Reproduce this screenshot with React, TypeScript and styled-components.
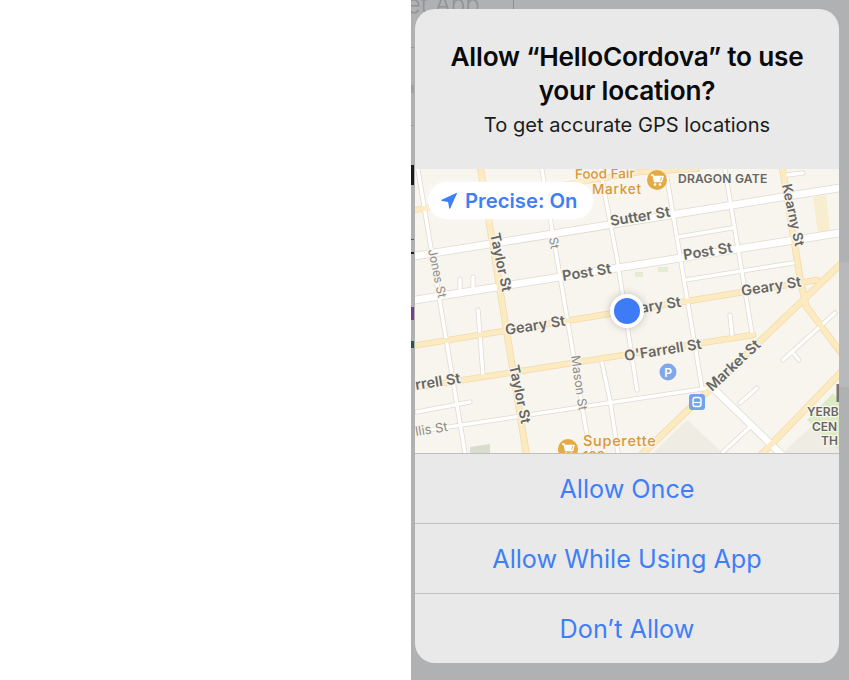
import React from "react";
import styled, { createGlobalStyle } from "styled-components";

const Global = createGlobalStyle`
  html, body { margin: 0; padding: 0; background: #fff; }
  body { font-family: Inter, "Liberation Sans", sans-serif; }
  #root { width: 849px; height: 680px; overflow: hidden; }
`;

const Page = styled.div`
  width: 849px;
  height: 680px;
  display: flex;
  overflow: hidden;
`;
const Blank = styled.div`
  width: 411px;
  flex: none;
  background: #fff;
`;
const Dim = styled.div`
  position: relative;
  flex: 1;
  background: #b0b1b3;
  padding: 9px 10px 17px 4px;
  display: flex;
  overflow: hidden;
`;
const BackText = styled.div`
  position: absolute;
  left: -22px;
  top: -9px;
  white-space: nowrap;
  color: #929395;
  font-size: 24px;
  line-height: 28px;
  font-weight: 300;
`;
const BackBar = styled.div`
  position: absolute;
  left: 102px;
  top: 0;
  width: 1px;
  height: 9px;
  background: #8b8c8e;
`;
const Sliver = styled.div<{ $top: number; $h: number; $c: string }>`
  position: absolute;
  left: 0;
  width: 3px;
  top: ${(p) => p.$top}px;
  height: ${(p) => p.$h}px;
  background: ${(p) => p.$c};
`;
const SidePanel = styled.div`
  position: absolute;
  right: 0;
  top: 262px;
  width: 10px;
  height: 125px;
  background: #b8b9ba;
`;
const Alert = styled.div`
  position: relative;
  flex: 1;
  border-radius: 20px;
  overflow: hidden;
  background: #e9e9ea;
  display: flex;
  flex-direction: column;
`;
const Header = styled.div`
  height: 160px;
  padding-top: 31px;
  box-sizing: border-box;
  text-align: center;
`;
const Title = styled.div`
  font-size: 26.2px;
  line-height: 34px;
  font-weight: 600;
  color: #0a0a0a;
  letter-spacing: -0.2px;
`;
const Message = styled.div`
  font-size: 20.1px;
  line-height: 26px;
  margin-top: 4px;
  color: #1c1c1c;
`;
const MapWrap = styled.div`
  position: relative;
  height: 284px;
  flex: none;
  background: #f8f5ee;
`;
const MapSvg = styled.svg`
  display: block;
  width: 424px;
  height: 284px;
`;
const Pill = styled.div`
  position: absolute;
  left: 13px;
  top: 13px;
  height: 37px;
  width: 165px;
  box-sizing: border-box;
  padding-left: 13px;
  border-radius: 19px;
  background: #fff;
  display: flex;
  align-items: center;
  gap: 7px;
  color: #3f7ff6;
  font-size: 20.3px;
  font-weight: 600;
  white-space: nowrap;
  box-shadow: 0 0 8px rgba(255, 255, 255, 0.6);
`;
const Dot = styled.div`
  position: absolute;
  left: 195px;
  top: 125px;
  width: 26px;
  height: 26px;
  border-radius: 50%;
  background: #3d7bf7;
  border: 4px solid #fff;
  box-shadow: 0 0 8px rgba(0, 0, 0, 0.22);
`;
const Actions = styled.div`
  flex: 1;
  display: flex;
  flex-direction: column;
`;
const Action = styled.div`
  flex: 1;
  display: flex;
  align-items: center;
  justify-content: center;
  border-top: 1px solid #bfbfc1;
  color: #3f7ff6;
  font-size: 25.2px;
`;

type L = { x: number; y: number; r: number; t: string; s?: number; c?: string; w?: number; ls?: number };
const labels: L[] = [
  { x: 611, y: 226, r: -9, t: "Sutter St", s: 14.5 },
  { x: 563, y: 281, r: -9, t: "Post St", s: 14.5 },
  { x: 684, y: 260, r: -9, t: "Post St", s: 14.5 },
  { x: 506, y: 335, r: -9, t: "Geary St", s: 14.5 },
  { x: 641, y: 313, r: -9, t: "ary St", s: 14.5 },
  { x: 742, y: 296, r: -9, t: "Geary St", s: 14.5 },
  { x: 416, y: 390, r: -9, t: "rrell St", s: 14.5 },
  { x: 625, y: 361, r: -9, t: "O'Farrell St", s: 14.5 },
  { x: 416, y: 436, r: -9, t: "llis St", s: 13, c: "#8d8d8a", w: 400 },
  { x: 490, y: 234, r: 78, t: "Taylor St", s: 14 },
  { x: 509, y: 366, r: 78, t: "Taylor St", s: 14 },
  { x: 782, y: 185, r: 78, t: "Kearny St", s: 13.5 },
  { x: 428, y: 250, r: 78, t: "Jones St", s: 12, c: "#8d8d8a", w: 400 },
  { x: 571, y: 356, r: 82, t: "Mason St", s: 12.5, c: "#8d8d8a", w: 400 },
  { x: 549, y: 238, r: 80, t: "St", s: 12, c: "#8d8d8a", w: 400 },
  { x: 712, y: 392, r: -43, t: "Market St", s: 14.5 },
  { x: 678, y: 183, r: 0, t: "DRAGON GATE", s: 12.1, ls: 0.2 },
  { x: 807, y: 416, r: 0, t: "YERB", s: 12 },
  { x: 812, y: 431, r: 0, t: "CEN", s: 12 },
  { x: 821, y: 445, r: 0, t: "TH", s: 12 },
  { x: 575, y: 179, r: -1, t: "Food Fair", s: 13.5, c: "#d9983a", w: 500 },
  { x: 592, y: 194, r: 0, t: "Market", s: 13.5, c: "#d9983a", w: 500, ls: 0.8 },
  { x: 583, y: 446, r: 0, t: "Superette", s: 14.5, c: "#d9983a", w: 500, ls: 0.7 },
  { x: 583, y: 461, r: 0, t: "100", s: 13, c: "#d9983a", w: 500 },
];

const RoadLabel = ({ x, y, r, t, s = 14, c = "#666663", w = 600, ls = 0 }: L) => (
  <text
    x={x}
    y={y}
    transform={`rotate(${r} ${x} ${y})`}
    fontFamily="Inter, sans-serif"
    fontSize={s}
    fontWeight={w}
    fill={c}
    letterSpacing={ls}
    stroke="#f8f5ee"
    strokeWidth={2.5}
    strokeLinejoin="round"
    paintOrder="stroke"
  >
    {t}
  </text>
);

const Cart = ({ cx, cy }: { cx: number; cy: number }) => (
  <g>
    <circle cx={cx} cy={cy} r={10} fill="#e5ab42" />
    <path
      d={`M${cx - 6} ${cy - 5}h2l1.6 6.5h7l1.4-5h-9.4`}
      fill="none"
      stroke="#fff"
      strokeWidth={1.5}
      strokeLinejoin="round"
    />
    <path d={`M${cx - 3} ${cy - 3}h7l-.9 4h-5.2z`} fill="#fff" />
    <circle cx={cx - 2} cy={cy + 4.5} r={1.3} fill="#fff" />
    <circle cx={cx + 3} cy={cy + 4.5} r={1.3} fill="#fff" />
  </g>
);

type Kind = "white" | "yellow";
const Casing = ({ d, w, kind }: { d: string; w: number; kind: Kind }) => (
  <path
    d={d}
    fill="none"
    strokeLinecap="round"
    strokeLinejoin="round"
    stroke={kind === "white" ? "#dfdacf" : "#f3d9ab"}
    strokeWidth={w + 1.5}
  />
);
const Surface = ({ d, w, kind }: { d: string; w: number; kind: Kind }) => (
  <path
    d={d}
    fill="none"
    strokeLinecap="round"
    strokeLinejoin="round"
    stroke={kind === "white" ? "#ffffff" : "#fcebc0"}
    strokeWidth={w}
  />
);

const network: { d: string; w: number; kind: Kind }[] = [
  { d: "M418 170L465 453", w: 3.5, kind: "white" },
  { d: "M542 170L590 453", w: 3.5, kind: "white" },
  { d: "M600 169L617 258L637 390", w: 3.5, kind: "white" },
  { d: "M602 363L610 400L618 453", w: 3.5, kind: "white" },
  { d: "M667 178L702 388", w: 3.5, kind: "white" },
  { d: "M725 170L752 333", w: 3.5, kind: "white" },
  { d: "M478 310L483 375", w: 3.5, kind: "white" },
  { d: "M460 279V290M473 277V288", w: 3.5, kind: "white" },
  { d: "M417 412L470 402", w: 3.5, kind: "white" },
  { d: "M678 237L732 228", w: 3.5, kind: "white" },
  { d: "M685 280L793 263", w: 3.5, kind: "white" },
  { d: "M730 315L732 335", w: 3.5, kind: "white" },
  { d: "M740 403L757 388", w: 3.5, kind: "white" },
  { d: "M723 452L750 427", w: 3.5, kind: "white" },
  { d: "M783 360L835 313M794 354L799 360", w: 3.5, kind: "white" },
  { d: "M787 175L803 173", w: 3.5, kind: "white" },
  { d: "M415 432L715 387", w: 3.5, kind: "white" },
  { d: "M713 388L785 458", w: 6.5, kind: "white" },
  { d: "M415 256L845 187", w: 7, kind: "white" },
  { d: "M415 300L845 232", w: 7, kind: "white" },
  { d: "M415 210L640 172L697 169", w: 4.5, kind: "yellow" },
  { d: "M480 165L527 458", w: 5.5, kind: "yellow" },
  { d: "M782 165L800 278L806 306L845 358", w: 5.5, kind: "yellow" },
  { d: "M412 346L817 280", w: 5, kind: "yellow" },
  { d: "M412 388L753 335", w: 5, kind: "yellow" },
  { d: "M640 456L845 260", w: 5.5, kind: "yellow" },
  { d: "M760 456L845 368", w: 5.5, kind: "yellow" },
];

const MapDrawing = () => (
  <MapSvg viewBox="415 169 424 284" xmlns="http://www.w3.org/2000/svg">
    <rect x="415" y="169" width="424" height="284" fill="#f8f5ee" />
    <path d="M813 197L826 195L830 232L818 234Z" fill="#f8edce" />
    <path d="M635 272H643V277H635ZM658 267H668V272H658Z" fill="#e5ecd6" />
    <path d="M470 447L490 444V453H470Z" fill="#d8ddcf" />
    <path d="M653 453L687 420L723 453Z" fill="#efece4" />
    <path d="M783 453L839 400V453Z" fill="#efece4" />
    <path d="M807 420L833 393L839 400V450L820 432Z" fill="#dcebc4" />
    {network.map((r, i) => (
      <Casing key={i} {...r} />
    ))}
    {network.map((r, i) => (
      <Surface key={i} {...r} />
    ))}
    {labels.map((l, i) => (
      <RoadLabel key={i} {...l} />
    ))}
    <rect x="836.5" y="384" width="2.5" height="18" fill="#77756d" />
    <Cart cx={657} cy={180} />
    <Cart cx={568} cy={449} />
    <circle cx="668" cy="372" r="8.5" fill="#7fa8ec" />
    <text x="668" y="376.5" textAnchor="middle" fontFamily="Inter, sans-serif" fontSize="12" fontWeight="600" fill="#fff">
      P
    </text>
    <rect x="689" y="394" width="16" height="16" rx="3" fill="#73a3ee" />
    <rect x="693" y="397.5" width="8" height="9" rx="2.5" fill="none" stroke="#fff" strokeWidth="1.4" />
    <path d="M693.5 402.5h7" stroke="#fff" strokeWidth="1.2" />
  </MapSvg>
);

const Arrow = () => (
  <svg width="17" height="17" viewBox="0 0 17 17">
    <path d="M16.4.6L9.3 16.3c-.3.6-1.1.5-1.2-.2L7.1 9.9.9 8.9C.2 8.8.1 8 .7 7.7z" fill="#3f7ff6" />
  </svg>
);

const slivers = [
  { top: 47, h: 1, c: "#98999b" },
  { top: 85, h: 8, c: "#a0a1a3" },
  { top: 125, h: 1, c: "#98999b" },
  { top: 165, h: 20, c: "#1a1a1a" },
  { top: 239, h: 1, c: "#55565a" },
  { top: 252, h: 2, c: "#1a1a1a" },
  { top: 307, h: 13, c: "#7a3f8c" },
  { top: 341, h: 7, c: "#1f5a4a" },
];

export default function App() {
  return (
    <Page>
      <Global />
      <Blank />
      <Dim>
        <BackText>Get App</BackText>
        <BackBar />
        {slivers.map((s) => (
          <Sliver key={s.top} $top={s.top} $h={s.h} $c={s.c} />
        ))}
        <SidePanel />
        <Alert>
          <Header>
            <Title>
              Allow “HelloCordova” to use
              <br />
              your location?
            </Title>
            <Message>To get accurate GPS locations</Message>
          </Header>
          <MapWrap>
            <MapDrawing />
            <Pill>
              <Arrow />
              Precise: On
            </Pill>
            <Dot />
          </MapWrap>
          <Actions>
            <Action>Allow Once</Action>
            <Action>Allow While Using App</Action>
            <Action>Don’t Allow</Action>
          </Actions>
        </Alert>
      </Dim>
    </Page>
  );
}
